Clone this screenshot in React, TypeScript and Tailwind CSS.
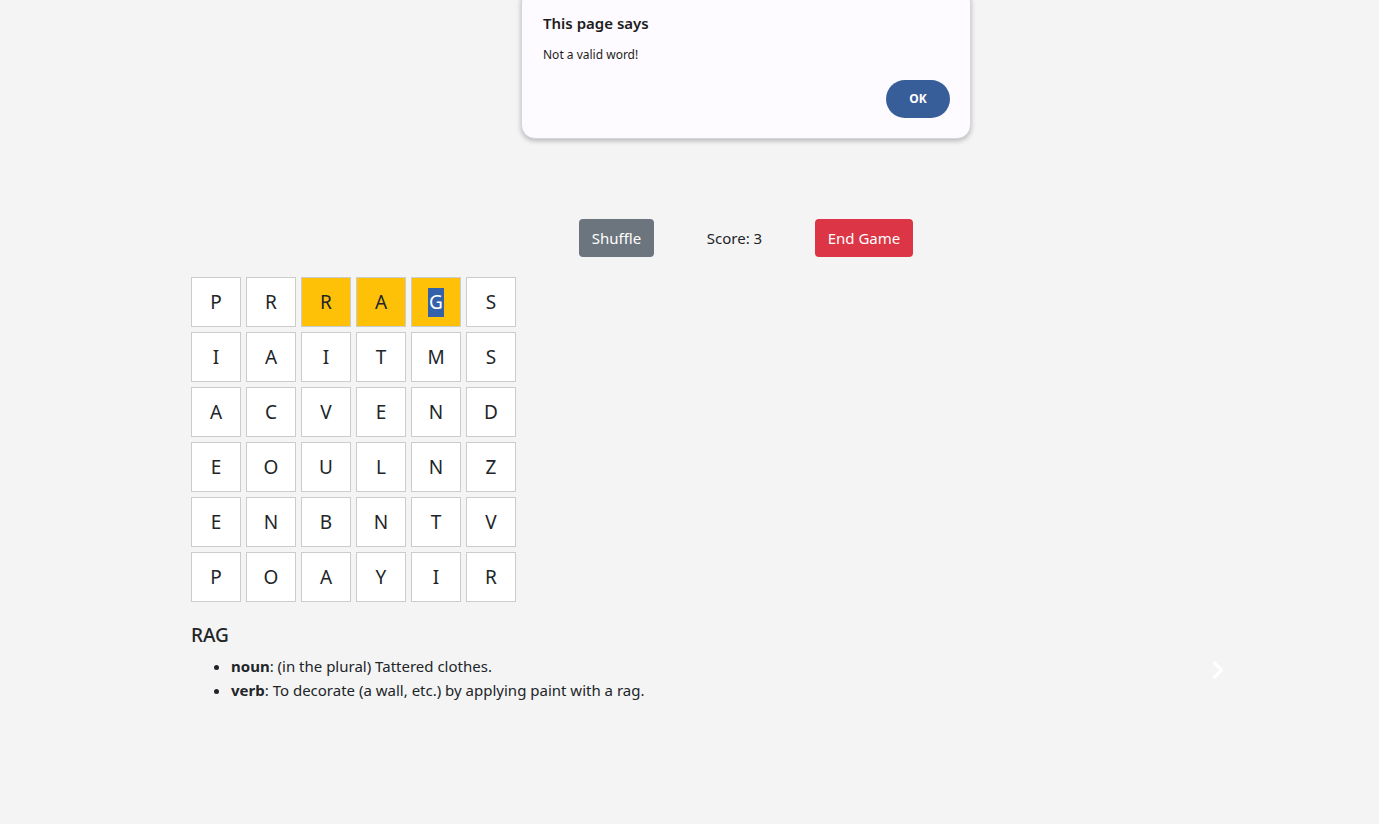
import React from "react";

const GRID = [
  ["P", "R", "R", "A", "G", "S"],
  ["I", "A", "I", "T", "M", "S"],
  ["A", "C", "V", "E", "N", "D"],
  ["E", "O", "U", "L", "N", "Z"],
  ["E", "N", "B", "N", "T", "V"],
  ["P", "O", "A", "Y", "I", "R"],
];

const SELECTED = ["0-2", "0-3", "0-4"];

const App = () => {
  return (
    <div
      className="relative min-h-[824px] w-full overflow-hidden bg-[#f4f4f4] text-[#212529]"
      style={{ fontFamily: '"Noto Sans", "Open Sans", sans-serif' }}
    >
      {/* alert dialog */}
      <div className="absolute left-[521px] top-[-12px] z-10 h-[151px] w-[450px] rounded-[14px] border border-[#d6d6da] bg-[#fdfbff] shadow-[0_2px_5px_rgba(0,0,0,0.25)]">
        <p className="absolute left-[21px] top-[24px] text-[15px] font-semibold leading-5 text-[#1d1b20]">
          This page says
        </p>
        <p className="absolute left-[21px] top-[56px] text-[12px] leading-5 text-[#1d1b20]">
          Not a valid word!
        </p>
        <button className="absolute left-[364px] top-[91px] flex h-[38px] w-[64px] items-center justify-center rounded-full bg-[#375e98] text-[12px] font-bold text-white">
          OK
        </button>
      </div>

      <div className="pt-[219px]">
        <div className="ml-[579px] flex items-center">
          <button className="h-[38px] w-[75px] rounded-[4px] bg-[#6c757d] text-[15px] text-white">
            Shuffle
          </button>
          <span className="w-[161px] text-center text-[15px]">Score: 3</span>
          <button className="h-[38px] w-[98px] rounded-[4px] bg-[#dc3545] text-[15px] text-white">
            End Game
          </button>
        </div>

        <div className="ml-[191px] mt-[20px] grid w-[325px] grid-cols-6 gap-[5px]">
          {GRID.map((row, r) =>
            row.map((letter, c) => {
              const picked = SELECTED.includes(`${r}-${c}`);
              const last = r === 0 && c === 4;
              return (
                <div
                  key={`${r}-${c}`}
                  className={`flex h-[50px] w-[50px] items-center justify-center border border-[#cccccc] text-[19px] ${
                    picked ? "bg-[#ffc107]" : "bg-white"
                  }`}
                >
                  {last ? (
                    <span className="bg-[#3361aa] px-[1px] leading-[29px] text-white">{letter}</span>
                  ) : (
                    letter
                  )}
                </div>
              );
            })
          )}
        </div>

        <div className="ml-[191px] mt-[21px]">
          <h5 className="text-[19px] font-medium leading-6">RAG</h5>
          <ul className="mt-[7px] list-disc pl-[40px] text-[15px] leading-6">
            <li>
              <strong className="font-bold">noun</strong>: (in the plural) Tattered clothes.
            </li>
            <li>
              <strong className="font-bold">verb</strong>: To decorate (a wall, etc.) by applying paint with a rag.
            </li>
          </ul>
        </div>
      </div>

      {/* carousel next arrow */}
      <svg
        className="absolute left-[1210px] top-[660px]"
        width="16"
        height="20"
        viewBox="0 0 16 20"
        fill="none"
      >
        <path d="M4.5 3 L11.5 10 L4.5 17" stroke="#ffffff" strokeWidth="3.2" strokeLinecap="round" strokeLinejoin="round" />
      </svg>
    </div>
  );
};

export default App;
